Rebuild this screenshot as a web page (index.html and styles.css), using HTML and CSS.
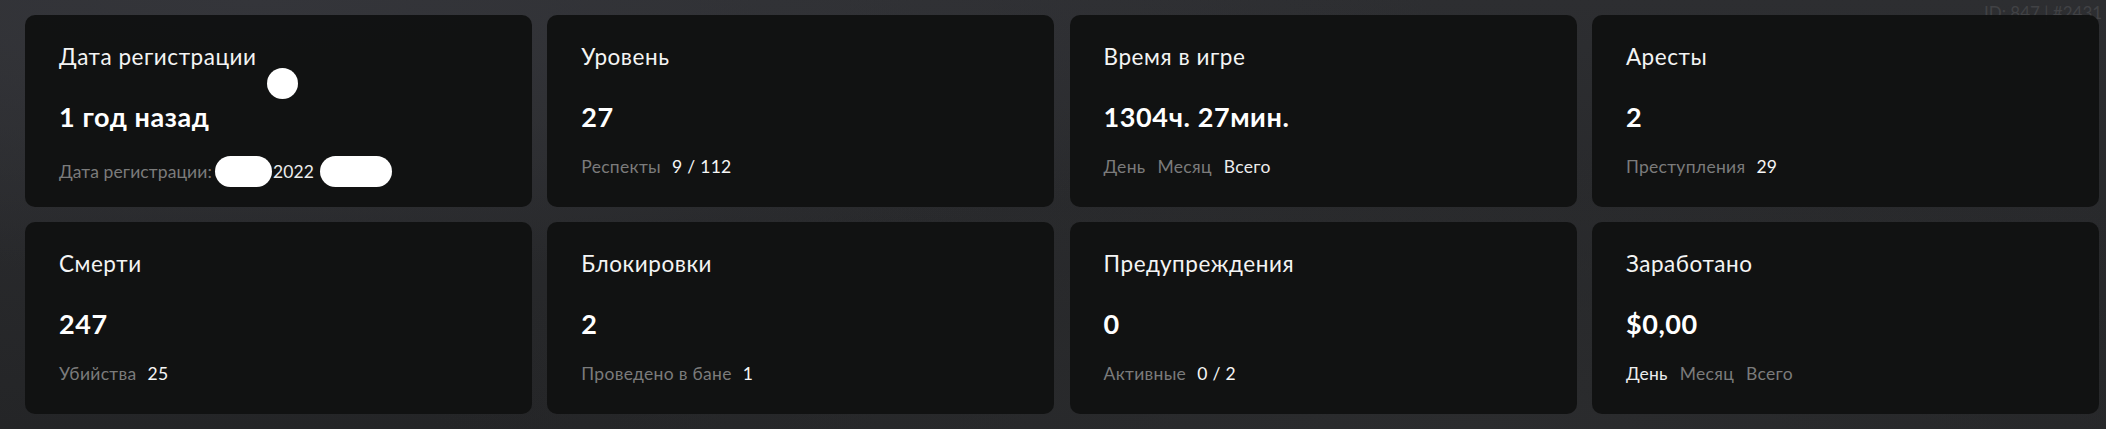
FILE: index.html
```html
<!DOCTYPE html>
<html lang="ru">
<head>
    <meta charset="UTF-8">
    <meta name="viewport" content="width=device-width, initial-scale=1.0">
    <title>Статистика</title>
    <link rel="stylesheet" href="styles.css">
</head>
<body>
    <div class="player-id">ID: 847 | #2431</div>
    <div class="stats">
        <div class="card">
            <div class="card-title">Дата регистрации</div>
            <span class="blot blot-round"></span>
            <div class="card-value">1 год назад</div>
            <div class="card-sub tight">
                <span class="muted">Дата регистрации:</span><span class="blot blot-date"></span><span class="plain">2022</span><span class="blot blot-time"></span>
            </div>
        </div>
        <div class="card">
            <div class="card-title">Уровень</div>
            <div class="card-value">27</div>
            <div class="card-sub">
                <span class="muted">Респекты</span>
                <span class="strong">9 / 112</span>
            </div>
        </div>
        <div class="card">
            <div class="card-title">Время в игре</div>
            <div class="card-value">1304ч. 27мин.</div>
            <div class="card-sub tabs">
                <span class="muted">День</span>
                <span class="muted">Месяц</span>
                <span class="plain">Всего</span>
            </div>
        </div>
        <div class="card">
            <div class="card-title">Аресты</div>
            <div class="card-value">2</div>
            <div class="card-sub">
                <span class="muted">Преступления</span>
                <span class="strong">29</span>
            </div>
        </div>

        <div class="card">
            <div class="card-title">Смерти</div>
            <div class="card-value">247</div>
            <div class="card-sub">
                <span class="muted">Убийства</span>
                <span class="strong">25</span>
            </div>
        </div>
        <div class="card">
            <div class="card-title">Блокировки</div>
            <div class="card-value">2</div>
            <div class="card-sub">
                <span class="muted">Проведено в бане</span>
                <span class="strong">1</span>
            </div>
        </div>
        <div class="card">
            <div class="card-title">Предупреждения</div>
            <div class="card-value">0</div>
            <div class="card-sub">
                <span class="muted">Активные</span>
                <span class="strong">0 / 2</span>
            </div>
        </div>
        <div class="card">
            <div class="card-title">Заработано</div>
            <div class="card-value">$0,00</div>
            <div class="card-sub tabs">
                <span class="plain">День</span>
                <span class="muted">Месяц</span>
                <span class="muted">Всего</span>
            </div>
        </div>
    </div>
</body>
</html>
```

FILE: styles.css
```css
body {
    margin: 0;
    height: 429px;
    overflow: hidden;
    font-family: 'Lato', 'Noto Sans', sans-serif;
    color: #f2f2f2;
    background-color: #272829;
    background-image:
        radial-gradient(ellipse at 12% 0%, #34353a 0%, rgba(52, 53, 58, 0) 45%),
        radial-gradient(ellipse at 70% 100%, #2b2c2e 0%, rgba(43, 44, 46, 0) 50%),
        linear-gradient(180deg, #2d2e31 0%, #242527 100%);
    position: relative;
}
.player-id {
    position: absolute;
    top: 2px;
    left: 1984px;
    font-size: 17px;
    color: #414245;
    white-space: nowrap;
}
.stats {
    position: relative;
    display: grid;
    grid-template-columns: repeat(4, 507px);
    grid-auto-rows: 192px;
    gap: 15px 15.3px;
    padding: 15px 0 0 25px;
}
.card {
    position: relative;
    background-color: rgba(17, 18, 18, 0.97);
    border-radius: 10px;
    padding: 29px 33px 0 34px;
    display: flex;
    flex-direction: column;
}
.card-title {
    font-size: 22.5px;
    letter-spacing: 0.55px;
    line-height: 26px;
    color: #f4f4f4;
}
.card-value {
    margin-top: 32px;
    font-size: 27px;
    letter-spacing: 0.6px;
    line-height: 30px;
    font-weight: 700;
    color: #fff;
}
.card-sub {
    margin-top: 24px;
    font-size: 17.5px;
    letter-spacing: 0.3px;
    line-height: 22px;
    display: flex;
    align-items: center;
    gap: 11px;
}
.card-sub.tabs {
    gap: 12px;
}
.card-sub.tight {
    gap: 0;
    letter-spacing: 0.1px;
}
.muted {
    color: #7b7b7b;
}
.plain {
    color: #ececec;
}
.strong {
    color: #f6f6f6;
}
.blot {
    display: inline-block;
    background-color: #fff;
    border-radius: 16px;
}
.card-sub .blot-date {
    width: 57px;
    height: 31px;
    margin: 0 1px 0 3px;
}
.card-sub .blot-time {
    width: 72px;
    height: 31px;
    margin-left: 6px;
}
.blot-round {
    position: absolute;
    left: 242px;
    top: 53px;
    width: 31px;
    height: 31px;
    border-radius: 50%;
}
```
